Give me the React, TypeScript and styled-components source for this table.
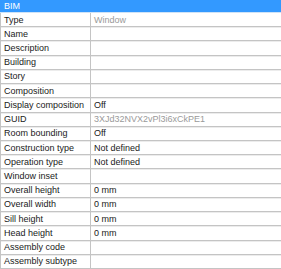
import React from 'react'
import styled, { createGlobalStyle } from 'styled-components'

interface Prop {
  label: string
  value?: string
  muted?: boolean
}

const props: Prop[] = [
  { label: 'Type', value: 'Window', muted: true },
  { label: 'Name' },
  { label: 'Description' },
  { label: 'Building' },
  { label: 'Story' },
  { label: 'Composition' },
  { label: 'Display composition', value: 'Off' },
  { label: 'GUID', value: '3XJd32NVX2vPl3i6xCkPE1', muted: true },
  { label: 'Room bounding', value: 'Off' },
  { label: 'Construction type', value: 'Not defined' },
  { label: 'Operation type', value: 'Not defined' },
  { label: 'Window inset' },
  { label: 'Overall height', value: '0 mm' },
  { label: 'Overall width', value: '0 mm' },
  { label: 'Sill height', value: '0 mm' },
  { label: 'Head height', value: '0 mm' },
  { label: 'Assembly code' },
  { label: 'Assembly subtype' }
]

const App: React.FC = () => {
  return (
    <>
      <GlobalStyle />
      <Panel>
        <Header>BIM</Header>
        <Table>
          {props.map(p => (
            <Row key={p.label}>
              <Label>{p.label}</Label>
              <Value $muted={p.muted}>{p.value}</Value>
            </Row>
          ))}
        </Table>
      </Panel>
    </>
  )
}

const GlobalStyle = createGlobalStyle`
  body {
    margin: 0;
    background: #fff;
    font-family: 'Liberation Sans', Arial, sans-serif;
  }
`

const Panel = styled.div`
  width: 281px;
  height: 269px;
  display: flex;
  flex-direction: column;
  background: #fff;
  overflow: hidden;
`

const Header = styled.div`
  height: 12px;
  background: #3399ff;
  color: #fff;
  font-size: 9px;
  line-height: 12px;
  padding-left: 4px;
  border-bottom: 1px solid #cfe3f7;
`

const Table = styled.div`
  flex: 1;
  display: grid;
  grid-template-rows: repeat(18, 1fr);
  border-left: 1px solid #c4c4c4;
`

const Row = styled.div`
  display: grid;
  grid-template-columns: 90px 1fr;
  border-bottom: 1px solid #c4c4c4;
  box-shadow: 0 1px 0 #ececec;
  font-size: 9px;
  color: #1a1a1a;
  align-items: center;
`

const Label = styled.div`
  padding-left: 3px;
  height: 100%;
  display: flex;
  align-items: center;
  border-right: 1px solid #c4c4c4;
  white-space: nowrap;
`

const Value = styled.div<{ $muted?: boolean }>`
  padding-left: 3px;
  color: ${p => (p.$muted ? '#9a9a9a' : '#1a1a1a')};
  white-space: nowrap;
`

export default App
